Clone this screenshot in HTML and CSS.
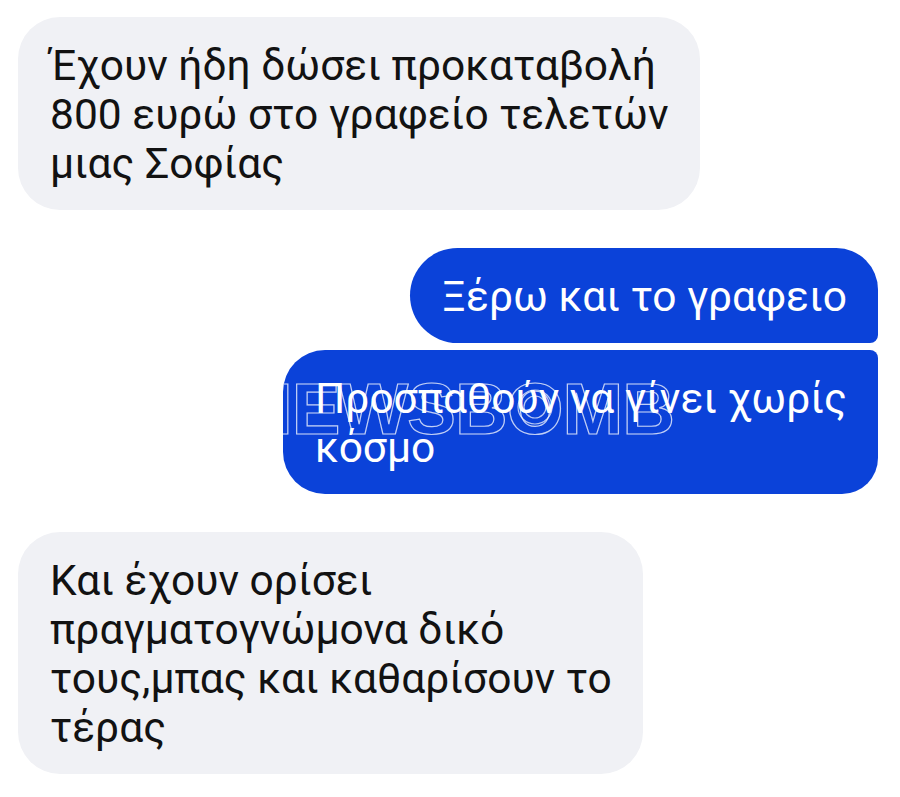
FILE: index.html
```html
<!DOCTYPE html>
<html lang="el">

<head>
    <meta charset="UTF-8">
    <meta name="viewport" content="width=device-width, initial-scale=1.0">
    <title>Συνομιλία</title>
    <link rel="stylesheet" href="styles.css">
</head>

<body>
    <div class="chat">
        <div class="bubble in">Έχουν ήδη δώσει προκαταβολή<br>800 ευρώ στο γραφείο τελετών<br>μιας Σοφίας</div>

        <div class="group out-group">
            <div class="bubble out first">Ξέρω και το γραφειο</div>
            <div class="bubble out last">
                Προσπαθούν να γίνει χωρίς<br>κόσμο
                <!-- watermark over the photo -->
                <span class="watermark" aria-hidden="true">NEWSBOMB</span>
                <svg class="mark-logo" width="40" height="40" viewBox="0 0 40 40">
                    <circle cx="20" cy="20" r="17" fill="none" stroke="rgba(255,255,255,0.7)" stroke-width="1.2"/>
                    <circle cx="20" cy="20" r="11" fill="none" stroke="rgba(255,255,255,0.7)" stroke-width="1.2"/>
                </svg>
            </div>
        </div>

        <div class="bubble in">Και έχουν ορίσει<br>πραγματογνώμονα δικό<br>τους,μπας και καθαρίσουν το<br>τέρας</div>
    </div>
</body>

</html>
```

FILE: styles.css
```css
body {
    margin: 0;
    background: #ffffff;
    font-family: Roboto, "Noto Sans", sans-serif;
}

.chat {
    display: flex;
    flex-direction: column;
    align-items: flex-start;
    gap: 38px;
    padding: 17px 22px 0 18px;
}

.group {
    display: flex;
    flex-direction: column;
    align-items: flex-end;
    gap: 7px;
    align-self: stretch;
}

.bubble {
    width: fit-content;
    padding: 24px 31px 22px 32px;
    font-size: 42.5px;
    line-height: 49px;
    border-radius: 42px;
}

.in {
    background: #f0f1f5;
    color: #121212;
}

.out {
    background: #0b42d9;
    color: #ffffff;
}

.out.first {
    border-radius: 48px 42px 8px 48px;
}

.out.last {
    position: relative;
    overflow: hidden;
    border-radius: 42px 8px 36px 42px;
}

.watermark {
    position: absolute;
    left: -43px;
    top: 22px;
    font-family: "Liberation Sans", Arial, sans-serif;
    font-weight: bold;
    font-size: 73px;
    line-height: 73px;
    letter-spacing: -1px;
    color: transparent;
    -webkit-text-stroke: 1.2px rgba(255, 255, 255, 0.75);
    pointer-events: none;
}

.mark-logo {
    position: absolute;
    left: 232px;
    top: 37px;
}
```
